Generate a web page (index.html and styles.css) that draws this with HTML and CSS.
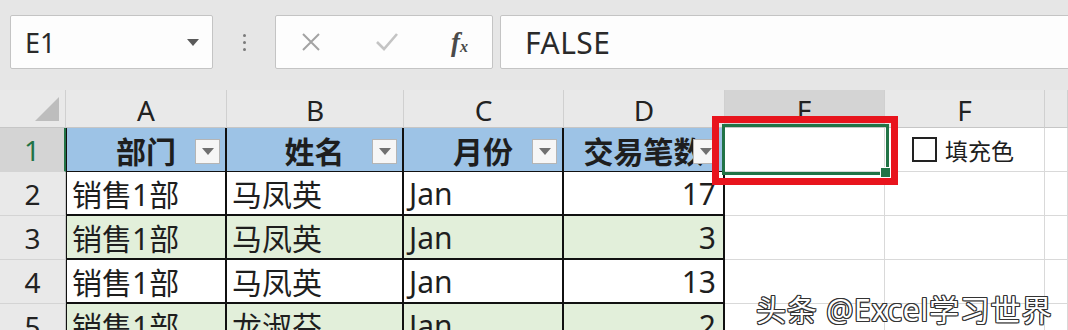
FILE: index.html
```html
<!DOCTYPE html>
<html lang="zh">
<head>
 <meta charset="UTF-8">
 <title>填充色</title>
 <link rel="stylesheet" href="styles.css">
</head>
<body>
<div class="toolbar">
 <div class="namebox">
  <span>E1</span>
  <svg class="caret" width="12" height="7" viewBox="0 0 12 7"><path d="M0 0H12L6 7Z" fill="#5a5a5a"/></svg>
 </div>
 <div class="dots"><i></i><i></i><i></i></div>
 <div class="fxbox">
  <svg width="22" height="22" viewBox="0 0 22 22"><path d="M3 3L19 19M19 3L3 19" stroke="#a3a3a3" stroke-width="2" fill="none"/></svg>
  <svg width="24" height="22" viewBox="0 0 24 22"><path d="M2 11L9 18L22 3" stroke="#c4c4c4" stroke-width="2.6" fill="none"/></svg>
  <span class="fx"><i>f</i><sub>x</sub></span>
 </div>
 <div class="formula">FALSE</div>
</div>

<div class="sheet">
 <div class="corner"><svg width="24" height="24" viewBox="0 0 24 24"><path d="M24 0V24H0Z" fill="#bdbdbd"/></svg></div>
 <div class="colhead">A</div>
 <div class="colhead">B</div>
 <div class="colhead">C</div>
 <div class="colhead">D</div>
 <div class="colhead sel">E</div>
 <div class="colhead">F</div>
 <div class="colhead"></div>

 <div class="rowhead sel">1</div>
 <div class="cell hd first">部门<span class="filter"></span></div>
 <div class="cell hd">姓名<span class="filter"></span></div>
 <div class="cell hd">月份<span class="filter"></span></div>
 <div class="cell hd">交易笔数<span class="filter"></span></div>
 <div class="cell plain"></div>
 <div class="cell plain check"><span class="box"></span>填充色</div>
 <div class="cell plain"></div>

 <div class="rowhead">2</div>
 <div class="cell first">销售1部</div>
 <div class="cell">马凤英</div>
 <div class="cell">Jan</div>
 <div class="cell num">17</div>
 <div class="cell plain"></div>
 <div class="cell plain"></div>
 <div class="cell plain"></div>

 <div class="rowhead">3</div>
 <div class="cell green first">销售1部</div>
 <div class="cell green">马凤英</div>
 <div class="cell green">Jan</div>
 <div class="cell green num">3</div>
 <div class="cell plain"></div>
 <div class="cell plain"></div>
 <div class="cell plain"></div>

 <div class="rowhead">4</div>
 <div class="cell first">销售1部</div>
 <div class="cell">马凤英</div>
 <div class="cell">Jan</div>
 <div class="cell num">13</div>
 <div class="cell plain"></div>
 <div class="cell plain"></div>
 <div class="cell plain"></div>

 <div class="rowhead">5</div>
 <div class="cell green first">销售1部</div>
 <div class="cell green">龙淑芬</div>
 <div class="cell green">Jan</div>
 <div class="cell green num">2</div>
 <div class="cell plain"></div>
 <div class="cell plain"></div>
 <div class="cell plain"></div>

 <div class="selection"><span class="handle"></span></div>
 <div class="redbox"></div>
 <div class="watermark">头条 @Excel学习世界</div>
</div>
</body>
</html>
```

FILE: styles.css
```css
body{
  margin: 0;
  width: 1068px;
  height: 330px;
  overflow: hidden;
  background: #fff;
  font-family: "Noto Sans", "Noto Sans CJK SC", sans-serif;
  color: #1e1e1e;
}
.toolbar{
  height: 90px;
  box-sizing: border-box;
  padding-top: 15px;
  background: #e6e6e6;
  display: flex;
  align-items: flex-start;
}
.namebox, .fxbox, .formula{
  height: 54px;
  box-sizing: border-box;
  background: #fdfdfd;
  border: 1px solid #c4c4c4;
  border-radius: 2px;
  display: flex;
  align-items: center;
}
.namebox{
  margin-left: 10px;
  width: 203px;
  padding: 0 13px 0 14px;
  justify-content: space-between;
  font-size: 27px;
  color: #2a2a2a;
}
.dots{
  width: 62px;
  height: 54px;
  display: flex;
  flex-direction: column;
  align-items: center;
  justify-content: center;
  gap: 4px;
}
.dots i{
  width: 3px;
  height: 3px;
  border-radius: 50%;
  background: #7a7a7a;
}
.fxbox{
  width: 218px;
  padding: 0 24px 0 24px;
  justify-content: space-between;
}
.fx{
  font-family: "Liberation Serif", serif;
  font-size: 27px;
  font-weight: bold;
  color: #4a4a4a;
}
.fx sub{
  font-size: 16px;
  font-style: italic;
  vertical-align: -1px;
}
.formula{
  flex: 1;
  margin-left: 7px;
  margin-right: -2px;
  padding-left: 24px;
  font-size: 30px;
  letter-spacing: 0.5px;
  color: #2a2a2a;
}

.sheet{
  position: relative;
  display: grid;
  grid-template-columns: 66px 161px 177px 160px 161px 160px 160px 1fr;
  grid-template-rows: 38px repeat(5, 44px);
  height: 240px;
  overflow: hidden;
}
.corner, .colhead, .rowhead{
  background: #e9e9e9;
  box-sizing: border-box;
  color: #222;
}
.corner{
  border-right: 1px solid #d0d0d0;
  border-bottom: 1px solid #c6c6c6;
  display: flex;
  justify-content: flex-end;
  align-items: flex-end;
  padding: 0 6px 6px 0;
}
.colhead{
  border-right: 1px solid #d0d0d0;
  border-bottom: 1px solid #c6c6c6;
  font-size: 28px;
  display: flex;
  justify-content: center;
  align-items: center;
  padding-top: 2px;
}
.colhead.sel{
  background: #d4d4d4;
}
.rowhead{
  border-right: 1px solid #c6c6c6;
  border-bottom: 1px solid #d4d4d4;
  font-size: 28px;
  display: flex;
  justify-content: center;
  align-items: center;
}
.rowhead.sel{
  background: #d4d4d4;
  color: #217346;
  border-right: 2px solid #217346;
}
.cell{
  position: relative;
  box-sizing: border-box;
  border-right: 2px solid #111;
  border-bottom: 2px solid #111;
  font-size: 30px;
  display: flex;
  align-items: center;
  padding: 0 5px;
  white-space: nowrap;
  overflow: hidden;
}
.cell.first{
  border-left: 1px solid #111;
}
.cell.hd{
  background: #9dc3e6;
  font-weight: bold;
  justify-content: center;
  border-bottom-width: 1px;
}
.cell.green{
  background: #e2efda;
}
.cell.num{
  justify-content: flex-end;
  padding-right: 7px;
}
.cell.plain{
  border-right: 1px solid #d9d9d9;
  border-bottom: 1px solid #d9d9d9;
}
.check{
  font-size: 23px;
  padding-left: 27px;
  gap: 8px;
}
.check .box{
  width: 21px;
  height: 21px;
  border: 2px solid #222;
}
.filter{
  position: absolute;
  right: 5px;
  top: 11px;
  width: 25px;
  height: 25px;
  box-sizing: border-box;
  background: #f6f6f6;
  border: 1px solid #b5b5b5;
  display: flex;
  align-items: center;
  justify-content: center;
}
.filter::after{
  content: "";
  border-left: 6px solid transparent;
  border-right: 6px solid transparent;
  border-top: 7px solid #707070;
}
.selection{
  position: absolute;
  left: 722px;
  top: 34px;
  width: 167px;
  height: 51px;
  box-sizing: border-box;
  border: 3px solid #217346;
}
.handle{
  position: absolute;
  right: -5px;
  bottom: -6px;
  width: 9px;
  height: 9px;
  background: #217346;
  border: 1px solid #fff;
}
.redbox{
  position: absolute;
  left: 712px;
  top: 26px;
  width: 186px;
  height: 69px;
  box-sizing: border-box;
  border: 7px solid #e8141d;
}
.watermark{
  position: absolute;
  left: 756px;
  top: 196px;
  font-size: 30px;
  color: #fff;
  letter-spacing: 0.8px;
  text-shadow: 1px 0 0 #333, -1px 0 0 #333, 0 1px 0 #333, 0 -1px 0 #333, 1px 1px 0 #333, -1px -1px 0 #333, 1px -1px 0 #333, -1px 1px 0 #333;
}
```
